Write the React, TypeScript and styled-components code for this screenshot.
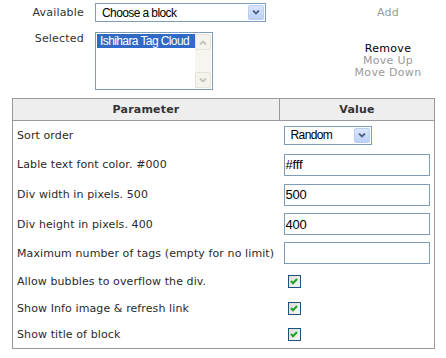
import styled, { createGlobalStyle } from "styled-components";

const GlobalStyle = createGlobalStyle`
  body {
    margin: 0;
    background: #fff;
    font-family: "DejaVu Sans", Verdana, sans-serif;
    font-size: 11px;
    color: #2a2a2a;
  }
`;

const controlFont = `"Liberation Sans", Arial, sans-serif`;

const Page = styled.div`
  width: 446px;
  padding-top: 3px;
`;

const BlockForm = styled.div`
  display: grid;
  grid-template-columns: 95px 240px 106px;
  row-gap: 10px;
`;

const Label = styled.div<{ $top?: boolean }>`
  padding-right: 11px;
  text-align: right;
  align-self: ${(p) => (p.$top ? "start" : "center")};
  color: #333;
  letter-spacing: 0.2px;
`;

const Actions = styled.div`
  display: flex;
  flex-direction: column;
  align-items: center;
  justify-content: center;
  line-height: 12px;
  letter-spacing: 0.3px;
`;

const Action = styled.span<{ $off?: boolean }>`
  color: ${(p) => (p.$off ? "#9a9a9a" : "#000")};
`;

const Select = styled.div<{ $w: number }>`
  box-sizing: border-box;
  width: ${(p) => p.$w}px;
  height: 19px;
  border: 1px solid #7f9db9;
  display: flex;
  align-items: center;
  justify-content: space-between;
  padding: 0 1px 0 6px;
  font-family: ${controlFont};
  font-size: 12px;
  letter-spacing: -0.6px;
  color: #000;
`;

const DropButton = styled.span`
  box-sizing: border-box;
  width: 16px;
  height: 15px;
  border: 1px solid #b9cdf6;
  border-radius: 2px;
  background: linear-gradient(#dbe6fe, #bcd0fa);
  display: flex;
  align-items: center;
  justify-content: center;
`;

const ListBox = styled.div`
  box-sizing: border-box;
  width: 118px;
  height: 58px;
  border: 1px solid #7f9db9;
  padding: 1px;
  display: flex;
  font-family: ${controlFont};
  font-size: 12px;
  letter-spacing: -0.6px;
`;

const Options = styled.div`
  flex: 1;
`;

const Option = styled.div<{ $selected?: boolean }>`
  height: 14px;
  line-height: 14px;
  padding-left: 3px;
  background: ${(p) => (p.$selected ? "#316ac5" : "transparent")};
  color: ${(p) => (p.$selected ? "#fff" : "#000")};
  white-space: nowrap;
`;

const ScrollTrack = styled.div`
  width: 16px;
  background: #f6f5ef;
  display: flex;
  flex-direction: column;
  justify-content: space-between;
`;

const ScrollButton = styled.div`
  box-sizing: border-box;
  height: 16px;
  border: 1px solid #e6e4d8;
  border-radius: 2px;
  background: #f4f3ec;
  display: flex;
  align-items: center;
  justify-content: center;
`;

const Table = styled.table`
  margin: 8px 0 0 12px;
  width: 423px;
  border-collapse: collapse;
  border: 1px solid #999;
`;

const Th = styled.th<{ $w?: number }>`
  width: ${(p) => (p.$w ? `${p.$w}px` : "auto")};
  height: 21px;
  padding: 0;
  background: #eeeeee;
  border: 1px solid #999;
  font-weight: bold;
  color: #333;
  letter-spacing: 0.2px;
`;

const Row = styled.tr<{ $h: number }>`
  height: ${(p) => p.$h}px;
`;

const Td = styled.td`
  padding: 0 4px;
  vertical-align: middle;
  letter-spacing: 0.1px;
  white-space: nowrap;
`;

const TextInput = styled.div`
  box-sizing: border-box;
  width: 146px;
  height: 22px;
  border: 1px solid #7f9db9;
  padding-left: 1px;
  display: flex;
  align-items: center;
  font-family: ${controlFont};
  font-size: 13px;
  letter-spacing: -0.2px;
  color: #000;
`;

const CheckBox = styled.span`
  box-sizing: border-box;
  margin-left: 4px;
  width: 13px;
  height: 13px;
  border: 1px solid #1c5180;
  background: linear-gradient(135deg, #dcdcd7, #f8f8f6);
  display: flex;
  align-items: center;
  justify-content: center;
`;

const Chevron = ({ up, color }: { up?: boolean; color: string }) => (
  <svg width="8" height="5" viewBox="0 0 8 5">
    <path
      d={up ? "M1 4.5 L4 1.5 L7 4.5" : "M1 0.5 L4 3.5 L7 0.5"}
      fill="none"
      stroke={color}
      strokeWidth="1.8"
    />
  </svg>
);

const Check = () => (
  <svg width="8" height="7" viewBox="0 0 8 7">
    <path d="M1 3 L3 5.2 L7 1" fill="none" stroke="#21a121" strokeWidth="2" />
  </svg>
);

type Param =
  | { label: string; kind: "select"; value: string; h: number }
  | { label: string; kind: "text"; value: string; h: number }
  | { label: string; kind: "check"; h: number };

const params: Param[] = [
  { label: "Sort order", kind: "select", value: "Random", h: 29 },
  { label: "Lable text font color. #000", kind: "text", value: "#fff", h: 30 },
  { label: "Div width in pixels. 500", kind: "text", value: "500", h: 30 },
  { label: "Div height in pixels. 400", kind: "text", value: "400", h: 29 },
  { label: "Maximum number of tags (empty for no limit)", kind: "text", value: "", h: 29 },
  { label: "Allow bubbles to overflow the div.", kind: "check", h: 27 },
  { label: "Show Info image & refresh link", kind: "check", h: 27 },
  { label: "Show title of block", kind: "check", h: 27 },
];

export default function App() {
  return (
    <Page>
      <GlobalStyle />
      <BlockForm>
        <Label>Available</Label>
        <Select $w={171}>
          <span>Choose a block</span>
          <DropButton>
            <Chevron color="#4d6185" />
          </DropButton>
        </Select>
        <Actions>
          <Action $off>Add</Action>
        </Actions>

        <Label $top>Selected</Label>
        <ListBox>
          <Options>
            <Option $selected>Ishihara Tag Cloud</Option>
          </Options>
          <ScrollTrack>
            <ScrollButton>
              <Chevron up color="#c4c3b8" />
            </ScrollButton>
            <ScrollButton>
              <Chevron color="#c4c3b8" />
            </ScrollButton>
          </ScrollTrack>
        </ListBox>
        <Actions>
          <Action>Remove</Action>
          <Action $off>Move Up</Action>
          <Action $off>Move Down</Action>
        </Actions>
      </BlockForm>

      <Table>
        <thead>
          <tr>
            <Th $w={266}>Parameter</Th>
            <Th>Value</Th>
          </tr>
        </thead>
        <tbody>
          {params.map((p) => (
            <Row key={p.label} $h={p.h}>
              <Td>{p.label}</Td>
              <Td>
                {p.kind === "select" && (
                  <Select $w={88}>
                    <span>{p.value}</span>
                    <DropButton>
                      <Chevron color="#4d6185" />
                    </DropButton>
                  </Select>
                )}
                {p.kind === "text" && <TextInput>{p.value}</TextInput>}
                {p.kind === "check" && (
                  <CheckBox>
                    <Check />
                  </CheckBox>
                )}
              </Td>
            </Row>
          ))}
        </tbody>
      </Table>
    </Page>
  );
}
